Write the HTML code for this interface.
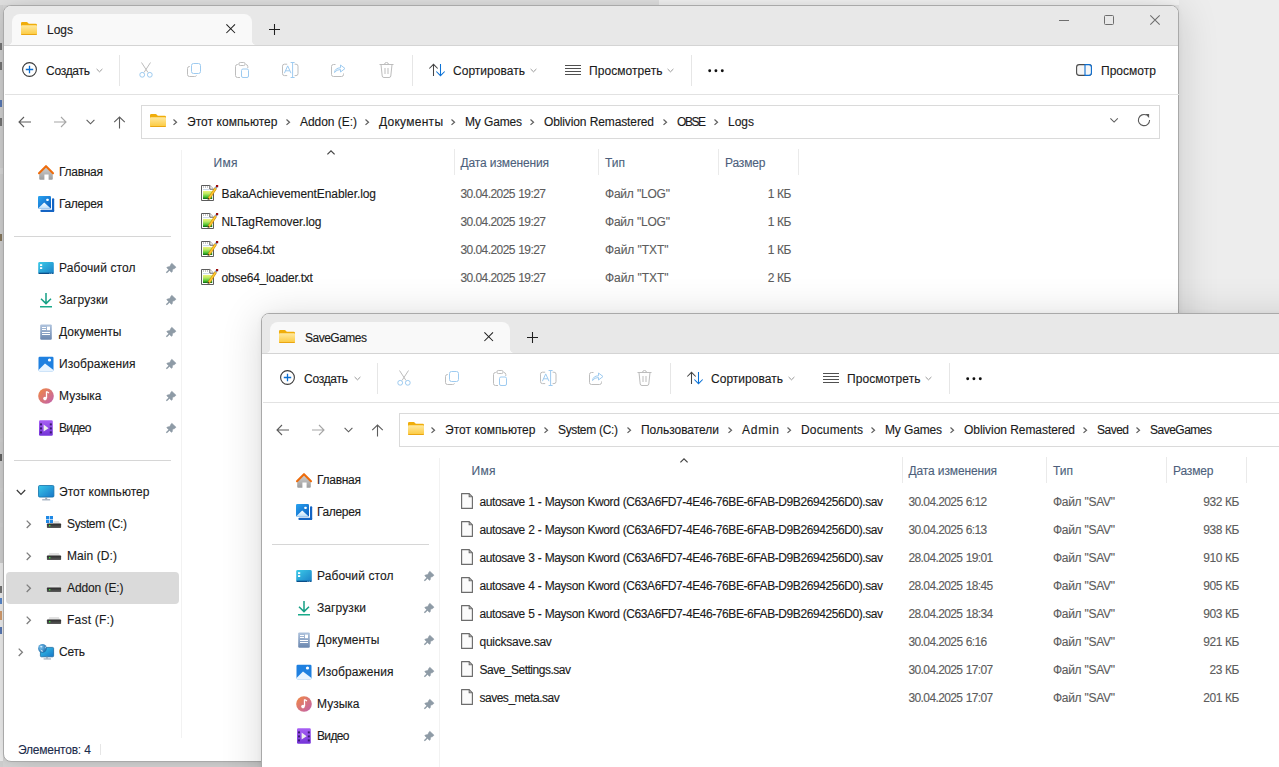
<!DOCTYPE html>
<html><head><meta charset="utf-8"><style>
html,body{margin:0;padding:0}
body{width:1279px;height:767px;overflow:hidden;position:relative;font-family:"Liberation Sans",sans-serif;font-size:12px}
.t{position:absolute;white-space:pre;line-height:16px;font-size:12px;-webkit-text-stroke:0.12px currentColor}
svg{overflow:visible}
</style></head><body>
<div style="position:absolute;left:0px;top:0px;width:1279px;height:767px;background:#d9d9d9"></div>
<div style="position:absolute;left:659px;top:0px;width:620px;height:767px;background:#e6e6e6"></div>
<div style="position:absolute;left:0px;top:0px;width:659px;height:5px;background:#e2e2e2"></div>
<div style="position:absolute;left:659px;top:0px;width:520px;height:5px;background:#f4f4f4"></div>
<div style="position:absolute;left:1179px;top:0px;width:100px;height:767px;background:#ededed"></div>
<div style="position:absolute;left:0px;top:5px;width:3px;height:762px;background:#d4d4d4"></div>
<div style="position:absolute;left:0px;top:168px;width:3px;height:6px;background:#dcdcdc"></div>
<div style="position:absolute;left:0px;top:438px;width:3px;height:4px;background:#d6d6d6"></div>
<div style="position:absolute;left:0px;top:488px;width:3px;height:4px;background:#d6d6d6"></div>
<div style="position:absolute;left:0px;top:523px;width:3px;height:4px;background:#d6d6d6"></div>
<div style="position:absolute;left:0px;top:563px;width:3px;height:198px;background:#f2f2f2"></div>
<div style="position:absolute;left:0px;top:43px;width:2px;height:7px;background:#777"></div>
<div style="position:absolute;left:0px;top:62px;width:2px;height:8px;background:#777"></div>
<div style="position:absolute;left:0px;top:100px;width:2px;height:7px;background:#5a7ab8"></div>
<div style="position:absolute;left:0px;top:118px;width:2px;height:8px;background:#777"></div>
<div style="position:absolute;left:0px;top:234px;width:2px;height:7px;background:#8a7a60"></div>
<div style="position:absolute;left:0px;top:454px;width:2px;height:7px;background:#666"></div>
<div style="position:absolute;left:0px;top:586px;width:2px;height:7px;background:#777"></div>
<div style="position:absolute;left:0px;top:598px;width:2px;height:6px;background:#5a8ad0"></div>
<div style="position:absolute;left:0px;top:611px;width:2px;height:9px;background:#d8a070"></div>
<div style="position:absolute;left:0px;top:627px;width:2px;height:7px;background:#5a7ab8"></div>
<div style="position:absolute;left:3px;top:5px;width:1176px;height:757px;background:#fff;border:1px solid #a9a9a9;border-radius:8px;box-sizing:border-box;box-shadow:0 4px 40px rgba(0,0,0,0.16),0 0 5px rgba(0,0,0,0.05);overflow:hidden"><div style="position:absolute;left:0;top:0;right:0;height:39px;background:#e8e8e8;border-bottom:1px solid #d4d4d4"></div></div>
<div style="position:absolute;left:12px;top:14px;width:240px;height:31px;background:#f9f9f9;border-radius:8px 8px 0 0"></div>
<div style="position:absolute;left:8px;top:41px;width:4px;height:4px;background:radial-gradient(circle at 0 0, transparent 3.6px, #f9f9f9 4.2px)"></div>
<div style="position:absolute;left:252px;top:41px;width:4px;height:4px;background:radial-gradient(circle at 100% 0, transparent 3.6px, #f9f9f9 4.2px)"></div>
<svg style="position:absolute;left:21px;top:22px" width="16" height="13" viewBox="0 0 16 13"><defs><linearGradient id="fg" x1="0" y1="0" x2="0" y2="1"><stop offset="0" stop-color="#ffe9a0"/><stop offset="1" stop-color="#fcc93c"/></linearGradient></defs><path d="M0 1.2 Q0 0 1.2 0 H5.6 Q6.2 0 6.6 0.5 L7.8 1.8 H14.8 Q16 1.8 16 3 V5 H0Z" fill="#f0ad0a"/><rect x="0" y="3.2" width="16" height="9.8" rx="1" fill="url(#fg)"/><rect x="0.3" y="12" width="15.4" height="1" fill="#eaa512"/></svg>
<div class="t" style="left:47.00px;top:22px;color:#1a1a1a;letter-spacing:-0.010px;">Logs</div>
<svg style="position:absolute;left:226px;top:24px" width="10" height="10" viewBox="0 0 10 10"><path d="M0.4 0.4 L9 9 M9 0.4 L0.4 9" stroke="#1f1f1f" stroke-width="1.05"/></svg>
<svg style="position:absolute;left:269px;top:24px" width="11" height="11" viewBox="0 0 11 11"><path d="M5.5 0 V11 M0 5.5 H11" stroke="#1f1f1f" stroke-width="1.05"/></svg>
<svg style="position:absolute;left:1059px;top:20px" width="10" height="1" viewBox="0 0 10 1"><rect width="10" height="1" fill="#6e6e6e"/></svg>
<svg style="position:absolute;left:1104px;top:15px" width="10" height="10" viewBox="0 0 10 10"><rect x="0.5" y="0.5" width="9" height="9" rx="1" fill="none" stroke="#6e6e6e" stroke-width="1"/></svg>
<svg style="position:absolute;left:1150px;top:15px" width="10" height="10" viewBox="0 0 10 10"><path d="M0.3 0.3 L9.7 9.7 M9.7 0.3 L0.3 9.7" stroke="#6e6e6e" stroke-width="1.05"/></svg>
<svg style="position:absolute;left:22px;top:62px" width="15" height="15" viewBox="0 0 15 15"><circle cx="7.5" cy="7.5" r="6.9" fill="none" stroke="#3c3c3c" stroke-width="1.1"/><path d="M7.5 3.8 V11.2 M3.8 7.5 H11.2" stroke="#0b6dd0" stroke-width="1.3"/></svg>
<div class="t" style="left:46.00px;top:63px;color:#1a1a1a;letter-spacing:-0.268px;">Создать</div>
<svg style="position:absolute;left:96px;top:68px" width="7" height="5" viewBox="0 0 7 5"><path d="M0.6 1 L3.5 3.8 L6.4 1" fill="none" stroke="#8a8a8a" stroke-width="0.9"/></svg>
<div style="position:absolute;left:119px;top:55px;width:1px;height:31px;background:#e6e6e6"></div>
<svg style="position:absolute;left:139px;top:62px" width="14" height="16" viewBox="0 0 14 16"><path d="M2.5 0.5 L9 10.5 M11.5 0.5 L5 10.5" stroke="#bdbdbd" stroke-width="1"/><circle cx="3.2" cy="12.8" r="2.4" fill="none" stroke="#9ecbf0" stroke-width="1"/><circle cx="10.8" cy="12.8" r="2.4" fill="none" stroke="#9ecbf0" stroke-width="1"/></svg>
<svg style="position:absolute;left:187px;top:63px" width="14" height="14" viewBox="0 0 14 14"><path d="M3 3.5 H2.5 Q0.5 3.5 0.5 5.5 V11.5 Q0.5 13.5 2.5 13.5 H7.5 Q9 13.5 9.6 12.5" fill="none" stroke="#bdbdbd" stroke-width="1"/><rect x="4.5" y="0.5" width="9" height="10" rx="2" fill="none" stroke="#9ecbf0" stroke-width="1"/></svg>
<svg style="position:absolute;left:235px;top:62px" width="14" height="16" viewBox="0 0 14 16"><path d="M3 2.5 H2.5 Q0.5 2.5 0.5 4.5 V13.5 Q0.5 15.5 2.5 15.5 H5 M11 2.5 Q12.5 2.5 12.8 4.5 V6" fill="none" stroke="#bdbdbd" stroke-width="1"/><rect x="3.8" y="0.5" width="6.4" height="3" rx="1.5" fill="none" stroke="#bdbdbd" stroke-width="1"/><rect x="6.5" y="7" width="7" height="8.5" rx="1.5" fill="none" stroke="#9ecbf0" stroke-width="1"/></svg>
<svg style="position:absolute;left:282px;top:62px" width="17" height="16" viewBox="0 0 17 16"><path d="M5.2 2.2 H2.4 Q0.5 2.2 0.5 4.2 V11.6 Q0.5 13.6 2.4 13.6 H5.2 M12.6 2.2 H14 Q16 2.2 16 4.2 V11.6 Q16 13.6 14 13.6 H12.6" fill="none" stroke="#bdbdbd" stroke-width="1"/><path d="M2.4 11.2 L5.7 3.9 L9 11.2 M3.5 8.8 H7.9" fill="none" stroke="#9ecbf0" stroke-width="1"/><path d="M10.6 0.5 V15.5 M8.6 0.5 H12.6 M8.6 15.5 H12.6" stroke="#9ecbf0" stroke-width="1"/></svg>
<svg style="position:absolute;left:331px;top:63px" width="15" height="14" viewBox="0 0 15 14"><path d="M4.5 1.5 H2.5 Q0.5 1.5 0.5 3.5 V11.5 Q0.5 13.5 2.5 13.5 H10.5 Q12.5 13.5 12.5 11.5 V10.5" fill="none" stroke="#bdbdbd" stroke-width="1"/><path d="M3.5 9.5 Q4 5 9.5 4.8 V2 L14 5.5 L9.5 9 V6.5 Q5.5 6.5 3.5 9.5Z" fill="none" stroke="#9ecbf0" stroke-width="1"/></svg>
<svg style="position:absolute;left:379px;top:62px" width="15" height="16" viewBox="0 0 15 16"><path d="M0.5 2.5 H14.5 M5.5 2.5 Q5.5 0.5 7.5 0.5 Q9.5 0.5 9.5 2.5 M2 2.5 L3.2 14 Q3.4 15.5 5 15.5 H10 Q11.6 15.5 11.8 14 L13 2.5 M6 6 V12 M9 6 V12" fill="none" stroke="#bdbdbd" stroke-width="1"/></svg>
<div style="position:absolute;left:412px;top:55px;width:1px;height:31px;background:#e6e6e6"></div>
<svg style="position:absolute;left:429px;top:62px" width="17" height="15" viewBox="0 0 17 15"><path d="M4.5 14 V2.3 M0.3 6.5 L4.5 2.3 L8.7 6.5" fill="none" stroke="#454545" stroke-width="1.05"/><path d="M11.5 2 V13.7 M7.3 9.5 L11.5 13.7 L15.7 9.5" fill="none" stroke="#0b72d6" stroke-width="1.05"/></svg>
<div class="t" style="left:453.00px;top:63px;color:#1a1a1a;letter-spacing:0.030px;">Сортировать</div>
<svg style="position:absolute;left:530px;top:68px" width="7" height="5" viewBox="0 0 7 5"><path d="M0.6 1 L3.5 3.8 L6.4 1" fill="none" stroke="#8a8a8a" stroke-width="0.9"/></svg>
<svg style="position:absolute;left:565px;top:65px" width="16" height="10" viewBox="0 0 16 10"><path d="M0 0.5 H16 M0 3.5 H16 M0 6.5 H16 M0 9.5 H16" stroke="#505050" stroke-width="1"/></svg>
<div class="t" style="left:589.00px;top:63px;color:#1a1a1a;letter-spacing:0.067px;">Просмотреть</div>
<svg style="position:absolute;left:667px;top:68px" width="7" height="5" viewBox="0 0 7 5"><path d="M0.6 1 L3.5 3.8 L6.4 1" fill="none" stroke="#8a8a8a" stroke-width="0.9"/></svg>
<div style="position:absolute;left:691px;top:55px;width:1px;height:31px;background:#e6e6e6"></div>
<svg style="position:absolute;left:707px;top:69px" width="18" height="4" viewBox="0 0 18 4"><circle cx="2.7" cy="1.7" r="1.45" fill="#111"/><circle cx="8.9" cy="1.7" r="1.45" fill="#111"/><circle cx="15.3" cy="1.7" r="1.45" fill="#111"/></svg>
<svg style="position:absolute;left:1076px;top:64px" width="16" height="12" viewBox="0 0 16 12"><rect x="0.6" y="0.6" width="14.8" height="10.8" rx="2.6" fill="#f6f6f6" stroke="#4a4a4a" stroke-width="1.1"/><path d="M9 0.6 H12.8 Q15.4 0.6 15.4 3.2 V8.8 Q15.4 11.4 12.8 11.4 H9Z" fill="#f6f6f6" stroke="#0b6dd0" stroke-width="1.1"/></svg>
<div class="t" style="left:1101.00px;top:63px;color:#1a1a1a;letter-spacing:0.027px;">Просмотр</div>
<div style="position:absolute;left:5px;top:94px;width:1174px;height:1px;background:#e2e2e2"></div>
<svg style="position:absolute;left:18px;top:116px" width="14" height="12" viewBox="0 0 14 12"><path d="M13 6 H1.2 M6 1 L1 6 L6 11" fill="none" stroke="#5c5c5c" stroke-width="1.1"/></svg>
<svg style="position:absolute;left:53px;top:116px" width="14" height="12" viewBox="0 0 14 12"><path d="M1 6 H12.8 M8 1 L13 6 L8 11" fill="none" stroke="#a6a6a6" stroke-width="1.1"/></svg>
<svg style="position:absolute;left:86px;top:119px" width="9" height="6" viewBox="0 0 9 6"><path d="M0.6 0.8 L4.5 4.8 L8.4 0.8" fill="none" stroke="#5c5c5c" stroke-width="1.1"/></svg>
<svg style="position:absolute;left:113px;top:116px" width="13" height="13" viewBox="0 0 13 13"><path d="M6.5 12.5 V1 M1.2 6.2 L6.5 1 L11.8 6.2" fill="none" stroke="#5c5c5c" stroke-width="1.1"/></svg>
<div style="position:absolute;left:141px;top:105px;width:1019px;height:34px;border:1px solid #dadada;box-sizing:border-box;background:#fff"></div>
<svg style="position:absolute;left:150px;top:114px" width="16" height="13" viewBox="0 0 16 13"><defs><linearGradient id="fg" x1="0" y1="0" x2="0" y2="1"><stop offset="0" stop-color="#ffe9a0"/><stop offset="1" stop-color="#fcc93c"/></linearGradient></defs><path d="M0 1.2 Q0 0 1.2 0 H5.6 Q6.2 0 6.6 0.5 L7.8 1.8 H14.8 Q16 1.8 16 3 V5 H0Z" fill="#f0ad0a"/><rect x="0" y="3.2" width="16" height="9.8" rx="1" fill="url(#fg)"/><rect x="0.3" y="12" width="15.4" height="1" fill="#eaa512"/></svg>
<svg style="position:absolute;left:173px;top:119px" width="6" height="8" viewBox="0 0 6 8"><path d="M0.5 0.5 L3.5 3.2 L0.5 5.9" fill="none" stroke="#606060" stroke-width="1.25"/></svg>
<div class="t" style="left:187.00px;top:114px;color:#1a1a1a;letter-spacing:0.059px;">Этот компьютер</div>
<svg style="position:absolute;left:286px;top:119px" width="6" height="8" viewBox="0 0 6 8"><path d="M0.5 0.5 L3.5 3.2 L0.5 5.9" fill="none" stroke="#606060" stroke-width="1.25"/></svg>
<div class="t" style="left:300.00px;top:114px;color:#1a1a1a;letter-spacing:-0.047px;word-spacing:0.047px;">Addon (E:)</div>
<svg style="position:absolute;left:365px;top:119px" width="6" height="8" viewBox="0 0 6 8"><path d="M0.5 0.5 L3.5 3.2 L0.5 5.9" fill="none" stroke="#606060" stroke-width="1.25"/></svg>
<div class="t" style="left:379.00px;top:114px;color:#1a1a1a;letter-spacing:0.268px;">Документы</div>
<svg style="position:absolute;left:451px;top:119px" width="6" height="8" viewBox="0 0 6 8"><path d="M0.5 0.5 L3.5 3.2 L0.5 5.9" fill="none" stroke="#606060" stroke-width="1.25"/></svg>
<div class="t" style="left:465.00px;top:114px;color:#1a1a1a;letter-spacing:-0.169px;word-spacing:0.169px;">My Games</div>
<svg style="position:absolute;left:530px;top:119px" width="6" height="8" viewBox="0 0 6 8"><path d="M0.5 0.5 L3.5 3.2 L0.5 5.9" fill="none" stroke="#606060" stroke-width="1.25"/></svg>
<div class="t" style="left:544.00px;top:114px;color:#1a1a1a;letter-spacing:-0.121px;word-spacing:0.121px;">Oblivion Remastered</div>
<svg style="position:absolute;left:663px;top:119px" width="6" height="8" viewBox="0 0 6 8"><path d="M0.5 0.5 L3.5 3.2 L0.5 5.9" fill="none" stroke="#606060" stroke-width="1.25"/></svg>
<div class="t" style="left:677.00px;top:114px;color:#1a1a1a;letter-spacing:-1.453px;">OBSE</div>
<svg style="position:absolute;left:714px;top:119px" width="6" height="8" viewBox="0 0 6 8"><path d="M0.5 0.5 L3.5 3.2 L0.5 5.9" fill="none" stroke="#606060" stroke-width="1.25"/></svg>
<div class="t" style="left:728.00px;top:114px;color:#1a1a1a;letter-spacing:-0.010px;">Logs</div>
<svg style="position:absolute;left:1110px;top:118px" width="9" height="5" viewBox="0 0 9 5"><path d="M0.4 0.4 L4.1 4.1 L7.8 0.4" fill="none" stroke="#5c5c5c" stroke-width="1.05"/></svg>
<svg style="position:absolute;left:1137px;top:113px" width="14" height="14" viewBox="0 0 14 14"><path d="M12.6 7 A5.6 5.6 0 1 1 9.6 2.1" fill="none" stroke="#5a5a5a" stroke-width="1.1"/><path d="M8.2 1.1 L12.1 1.1 L12.1 4.9Z" fill="#5a5a5a"/></svg>
<div style="position:absolute;left:181px;top:150px;width:1px;height:588px;background:#f2f2f2"></div>
<svg style="position:absolute;left:38px;top:164px" width="17" height="17" viewBox="0 0 17 17"><defs><linearGradient id="hg" x1="0" y1="0" x2="0" y2="1"><stop offset="0" stop-color="#d0d0d0"/><stop offset="1" stop-color="#9c9c9c"/></linearGradient></defs><path d="M1.2 9 L8 3 L14.8 9 V14.8 Q14.8 15.8 13.8 15.8 H10.6 V10.6 H6.4 V15.8 H2.2 Q1.2 15.8 1.2 14.8Z" fill="url(#hg)"/><path d="M1 9.2 L8 2.2 L15 9.2" fill="none" stroke="#ee6c0c" stroke-width="2.1" stroke-linecap="round" stroke-linejoin="round"/></svg>
<div class="t" style="left:59.00px;top:164px;color:#1a1a1a;letter-spacing:-0.281px;">Главная</div>
<svg style="position:absolute;left:38px;top:196px" width="17" height="16" viewBox="0 0 17 16"><defs><linearGradient id="gg" x1="0" y1="0" x2="1" y2="1"><stop offset="0" stop-color="#2aa4f0"/><stop offset="1" stop-color="#0a5cc0"/></linearGradient><linearGradient id="gm" x1="0" y1="0" x2="0" y2="1"><stop offset="0" stop-color="#ffffff"/><stop offset="1" stop-color="#b8dcfa"/></linearGradient></defs><rect x="14" y="2.2" width="2.2" height="13.8" rx="1" fill="#1464c4"/><rect x="2.4" y="13.8" width="13.8" height="2.2" rx="1" fill="#1464c4"/><rect x="0" y="0" width="13" height="12.6" rx="1.2" fill="url(#gg)"/><path d="M0 12.6 L6.2 6.6 L12.8 12.6Z" fill="url(#gm)"/><rect x="8.4" y="2.8" width="2.2" height="2.2" rx="0.5" fill="#fff"/></svg>
<div class="t" style="left:59.00px;top:196px;color:#1a1a1a;letter-spacing:-0.339px;">Галерея</div>
<div style="position:absolute;left:14px;top:236px;width:157px;height:1px;background:#d6d6d6"></div>
<svg style="position:absolute;left:38px;top:260px" width="17" height="16" viewBox="0 0 17 16"><defs><linearGradient id="dg" x1="0" y1="0" x2="1" y2="1"><stop offset="0" stop-color="#3ccbe8"/><stop offset="1" stop-color="#1a80c8"/></linearGradient></defs><rect x="0.2" y="2" width="15.6" height="12" rx="1.4" fill="url(#dg)"/><rect x="0.6" y="12.7" width="14.8" height="1.3" fill="#0b4e88"/><rect x="11.6" y="12.9" width="0.7" height="1.1" fill="#9ad4f0"/><rect x="13.4" y="12.9" width="0.7" height="1.1" fill="#9ad4f0"/><rect x="2" y="4.2" width="2.2" height="1.8" fill="#fff"/><rect x="2" y="7.2" width="2.2" height="1.8" fill="#fff"/></svg>
<div class="t" style="left:59.00px;top:260px;color:#1a1a1a;letter-spacing:0.107px;">Рабочий стол</div>
<svg style="position:absolute;left:166px;top:263px" width="11" height="11" viewBox="0 0 11 11"><path d="M5.8 0.3 L10 4.2 L8.6 5.6 L6.6 6.2 L6.2 8.8 L5.4 9.3 L0.8 4.8 L1.3 4 L3.8 3.6 L4.8 1.6 Z" fill="#8e9ba6" stroke="#8e9ba6" stroke-width="0.6" stroke-linejoin="round"/><path d="M3.2 7 L0.4 9.8" stroke="#8e9ba6" stroke-width="1.4"/></svg>
<svg style="position:absolute;left:38px;top:292px" width="16" height="16" viewBox="0 0 16 16"><path d="M8 1 V11.5 M3 6.8 L8 11.6 L13 6.8" fill="none" stroke="#16a085" stroke-width="1.5"/><rect x="2" y="14" width="12" height="1.5" fill="#1aaa8a"/></svg>
<div class="t" style="left:59.00px;top:292px;color:#1a1a1a;letter-spacing:0.100px;">Загрузки</div>
<svg style="position:absolute;left:166px;top:295px" width="11" height="11" viewBox="0 0 11 11"><path d="M5.8 0.3 L10 4.2 L8.6 5.6 L6.6 6.2 L6.2 8.8 L5.4 9.3 L0.8 4.8 L1.3 4 L3.8 3.6 L4.8 1.6 Z" fill="#8e9ba6" stroke="#8e9ba6" stroke-width="0.6" stroke-linejoin="round"/><path d="M3.2 7 L0.4 9.8" stroke="#8e9ba6" stroke-width="1.4"/></svg>
<svg style="position:absolute;left:38px;top:324px" width="16" height="16" viewBox="0 0 16 16"><defs><linearGradient id="docg" x1="0" y1="0" x2="0" y2="1"><stop offset="0" stop-color="#b0c4de"/><stop offset="1" stop-color="#6a86ae"/></linearGradient></defs><rect x="2.2" y="0.4" width="11.6" height="15.4" rx="1.2" fill="url(#docg)"/><path d="M4 3.5 H8 M4 5.5 H8 M4 8.5 H12 M4 10.5 H12" stroke="#fff" stroke-width="1"/><rect x="9" y="2.6" width="3" height="3.6" fill="#fff"/></svg>
<div class="t" style="left:59.00px;top:324px;color:#1a1a1a;letter-spacing:0.080px;">Документы</div>
<svg style="position:absolute;left:166px;top:327px" width="11" height="11" viewBox="0 0 11 11"><path d="M5.8 0.3 L10 4.2 L8.6 5.6 L6.6 6.2 L6.2 8.8 L5.4 9.3 L0.8 4.8 L1.3 4 L3.8 3.6 L4.8 1.6 Z" fill="#8e9ba6" stroke="#8e9ba6" stroke-width="0.6" stroke-linejoin="round"/><path d="M3.2 7 L0.4 9.8" stroke="#8e9ba6" stroke-width="1.4"/></svg>
<svg style="position:absolute;left:38px;top:356px" width="16" height="16" viewBox="0 0 16 16"><rect x="0.5" y="0.8" width="15" height="14.4" rx="1.2" fill="#1f80e0"/><path d="M0.5 14 L7 7.5 L15.5 14 V15.2 H0.5Z" fill="#e8f4ff"/><circle cx="11.5" cy="4" r="1.6" fill="#fff"/></svg>
<div class="t" style="left:59.00px;top:356px;color:#1a1a1a;letter-spacing:0.108px;">Изображения</div>
<svg style="position:absolute;left:166px;top:359px" width="11" height="11" viewBox="0 0 11 11"><path d="M5.8 0.3 L10 4.2 L8.6 5.6 L6.6 6.2 L6.2 8.8 L5.4 9.3 L0.8 4.8 L1.3 4 L3.8 3.6 L4.8 1.6 Z" fill="#8e9ba6" stroke="#8e9ba6" stroke-width="0.6" stroke-linejoin="round"/><path d="M3.2 7 L0.4 9.8" stroke="#8e9ba6" stroke-width="1.4"/></svg>
<svg style="position:absolute;left:38px;top:388px" width="16" height="16" viewBox="0 0 16 16"><defs><linearGradient id="mg" x1="0" y1="0" x2="1" y2="1"><stop offset="0" stop-color="#f28a40"/><stop offset="1" stop-color="#c060b0"/></linearGradient></defs><circle cx="8" cy="8" r="7.8" fill="url(#mg)"/><path d="M8.5 3.5 V10.2" stroke="#fff" stroke-width="1.3"/><path d="M8.5 3.5 L11 5" stroke="#fff" stroke-width="1.3"/><circle cx="7" cy="10.6" r="1.8" fill="#fff"/></svg>
<div class="t" style="left:59.00px;top:388px;color:#1a1a1a;letter-spacing:0.009px;">Музыка</div>
<svg style="position:absolute;left:166px;top:391px" width="11" height="11" viewBox="0 0 11 11"><path d="M5.8 0.3 L10 4.2 L8.6 5.6 L6.6 6.2 L6.2 8.8 L5.4 9.3 L0.8 4.8 L1.3 4 L3.8 3.6 L4.8 1.6 Z" fill="#8e9ba6" stroke="#8e9ba6" stroke-width="0.6" stroke-linejoin="round"/><path d="M3.2 7 L0.4 9.8" stroke="#8e9ba6" stroke-width="1.4"/></svg>
<svg style="position:absolute;left:38px;top:420px" width="16" height="16" viewBox="0 0 16 16"><defs><linearGradient id="vg" x1="0" y1="0" x2="0" y2="1"><stop offset="0" stop-color="#a860f4"/><stop offset="1" stop-color="#7434d8"/></linearGradient></defs><rect x="1" y="0.2" width="13.8" height="15.6" rx="1.2" fill="url(#vg)"/><rect x="2" y="3.4" width="2" height="2" fill="#3a1a70"/><rect x="2" y="7.4" width="2" height="2" fill="#3a1a70"/><rect x="2" y="11.4" width="2" height="2" fill="#3a1a70"/><rect x="11.8" y="3.4" width="2" height="2" fill="#3a1a70"/><rect x="11.8" y="7.4" width="2" height="2" fill="#3a1a70"/><rect x="11.8" y="11.4" width="2" height="2" fill="#3a1a70"/><path d="M5.6 4.6 L10.6 8.2 L5.6 11.6Z" fill="#eeeeee"/></svg>
<div class="t" style="left:59.00px;top:420px;color:#1a1a1a;letter-spacing:-0.641px;">Видео</div>
<svg style="position:absolute;left:166px;top:423px" width="11" height="11" viewBox="0 0 11 11"><path d="M5.8 0.3 L10 4.2 L8.6 5.6 L6.6 6.2 L6.2 8.8 L5.4 9.3 L0.8 4.8 L1.3 4 L3.8 3.6 L4.8 1.6 Z" fill="#8e9ba6" stroke="#8e9ba6" stroke-width="0.6" stroke-linejoin="round"/><path d="M3.2 7 L0.4 9.8" stroke="#8e9ba6" stroke-width="1.4"/></svg>
<div style="position:absolute;left:14px;top:460px;width:157px;height:1px;background:#d6d6d6"></div>
<div style="position:absolute;left:6px;top:572px;width:173px;height:32px;background:#dadada;border-radius:4px"></div>
<svg style="position:absolute;left:16px;top:489px" width="10" height="7" viewBox="0 0 10 7"><path d="M0.8 1 L5 5.4 L9.2 1" fill="none" stroke="#3a3a3a" stroke-width="1.2"/></svg>
<svg style="position:absolute;left:38px;top:485px" width="17" height="17" viewBox="0 0 17 17"><defs><linearGradient id="cg" x1="0" y1="0" x2="1" y2="1"><stop offset="0" stop-color="#38c8ea"/><stop offset="1" stop-color="#1776c8"/></linearGradient></defs><rect x="0.5" y="0.5" width="15.4" height="11.6" rx="1.2" fill="url(#cg)" stroke="#1470a8" stroke-width="0.8"/><rect x="7.2" y="12.2" width="2" height="2.2" fill="#9aa8b8"/><rect x="4.2" y="14.2" width="8" height="1.2" fill="#9aa8b8"/></svg>
<div class="t" style="left:59.00px;top:484px;color:#1a1a1a;letter-spacing:0.059px;">Этот компьютер</div>
<svg style="position:absolute;left:26px;top:520px" width="6" height="9" viewBox="0 0 6 9"><path d="M0.7 0.6 L4.4 4.3 L0.7 8" fill="none" stroke="#7e7e7e" stroke-width="1.3"/></svg>
<svg style="position:absolute;left:46px;top:516px" width="16" height="13" viewBox="0 0 16 13"><rect x="0" y="0" width="3.2" height="3.2" fill="#1e88e5"/><rect x="3.8" y="0" width="3.2" height="3.2" fill="#1e88e5"/><rect x="0" y="3.8" width="3.2" height="3.2" fill="#1e88e5"/><rect x="3.8" y="3.8" width="3.2" height="3.2" fill="#1e88e5"/><defs><linearGradient id="dv" x1="0" y1="0" x2="0" y2="1"><stop offset="0" stop-color="#2a2a2a"/><stop offset="1" stop-color="#5a5a5a"/></linearGradient></defs><path d="M7.2 7.8 L7.6 5 H12.8 L14 7.8Z" fill="#e2e2e2"/><rect x="0.9" y="7.6" width="14.2" height="4.3" rx="0.6" fill="url(#dv)"/><rect x="3" y="9" width="1.4" height="1.4" fill="#3ddc3d"/></svg>
<div class="t" style="left:67.00px;top:516px;color:#1a1a1a;letter-spacing:-0.372px;word-spacing:0.372px;">System (C:)</div>
<svg style="position:absolute;left:26px;top:552px" width="6" height="9" viewBox="0 0 6 9"><path d="M0.7 0.6 L4.4 4.3 L0.7 8" fill="none" stroke="#7e7e7e" stroke-width="1.3"/></svg>
<svg style="position:absolute;left:46px;top:548px" width="16" height="13" viewBox="0 0 16 13"><defs><linearGradient id="dv" x1="0" y1="0" x2="0" y2="1"><stop offset="0" stop-color="#2a2a2a"/><stop offset="1" stop-color="#5a5a5a"/></linearGradient></defs><path d="M2.2 7.8 L3.4 5 H12.8 L14 7.8Z" fill="#e2e2e2"/><rect x="0.9" y="7.6" width="14.2" height="4.3" rx="0.6" fill="url(#dv)"/><rect x="3" y="9" width="1.4" height="1.4" fill="#3ddc3d"/></svg>
<div class="t" style="left:67.00px;top:548px;color:#1a1a1a;letter-spacing:0.082px;">Main (D:)</div>
<svg style="position:absolute;left:26px;top:584px" width="6" height="9" viewBox="0 0 6 9"><path d="M0.7 0.6 L4.4 4.3 L0.7 8" fill="none" stroke="#7e7e7e" stroke-width="1.3"/></svg>
<svg style="position:absolute;left:46px;top:580px" width="16" height="13" viewBox="0 0 16 13"><defs><linearGradient id="dv" x1="0" y1="0" x2="0" y2="1"><stop offset="0" stop-color="#2a2a2a"/><stop offset="1" stop-color="#5a5a5a"/></linearGradient></defs><path d="M2.2 7.8 L3.4 5 H12.8 L14 7.8Z" fill="#e2e2e2"/><rect x="0.9" y="7.6" width="14.2" height="4.3" rx="0.6" fill="url(#dv)"/><rect x="3" y="9" width="1.4" height="1.4" fill="#3ddc3d"/></svg>
<div class="t" style="left:67.00px;top:580px;color:#1a1a1a;letter-spacing:-0.109px;word-spacing:0.109px;">Addon (E:)</div>
<svg style="position:absolute;left:26px;top:616px" width="6" height="9" viewBox="0 0 6 9"><path d="M0.7 0.6 L4.4 4.3 L0.7 8" fill="none" stroke="#7e7e7e" stroke-width="1.3"/></svg>
<svg style="position:absolute;left:46px;top:612px" width="16" height="13" viewBox="0 0 16 13"><defs><linearGradient id="dv" x1="0" y1="0" x2="0" y2="1"><stop offset="0" stop-color="#2a2a2a"/><stop offset="1" stop-color="#5a5a5a"/></linearGradient></defs><path d="M2.2 7.8 L3.4 5 H12.8 L14 7.8Z" fill="#e2e2e2"/><rect x="0.9" y="7.6" width="14.2" height="4.3" rx="0.6" fill="url(#dv)"/><rect x="3" y="9" width="1.4" height="1.4" fill="#3ddc3d"/></svg>
<div class="t" style="left:67.00px;top:612px;color:#1a1a1a;letter-spacing:0.209px;">Fast (F:)</div>
<svg style="position:absolute;left:18px;top:648px" width="6" height="9" viewBox="0 0 6 9"><path d="M0.7 0.6 L4.4 4.3 L0.7 8" fill="none" stroke="#7e7e7e" stroke-width="1.3"/></svg>
<svg style="position:absolute;left:38px;top:644px" width="17" height="17" viewBox="0 0 17 17"><defs><linearGradient id="ng" x1="0" y1="0" x2="1" y2="1"><stop offset="0" stop-color="#38c8ea"/><stop offset="1" stop-color="#1776c8"/></linearGradient><radialGradient id="ngl" cx="0.35" cy="0.35" r="0.7"><stop offset="0" stop-color="#7cc4f0"/><stop offset="1" stop-color="#1c6aa8"/></radialGradient></defs><rect x="2.4" y="3.4" width="13.2" height="9.4" rx="1" fill="url(#ng)" stroke="#0f5f98" stroke-width="0.7"/><rect x="8.2" y="12.8" width="1.6" height="1.8" fill="#9aa8b8"/><rect x="5.6" y="14.4" width="7.4" height="1.1" fill="#9aa8b8"/><circle cx="4.4" cy="4.4" r="4.3" fill="url(#ngl)"/><path d="M1.6 2.6 Q3 1.6 4.6 2.2 L3.6 3.6Z M2.2 5.6 L4.6 6.4 L5.2 7.8 L3.4 7.6Z M7 2.2 L8.2 3.6 L7.6 4.6Z" fill="#e8f4ff" opacity="0.85"/></svg>
<div class="t" style="left:59.00px;top:644px;color:#1a1a1a;letter-spacing:-0.234px;">Сеть</div>
<div class="t" style="left:18.00px;top:742px;color:#1c2c4c;letter-spacing:-0.222px;word-spacing:0.222px;">Элементов: 4</div>
<div style="position:absolute;left:100px;top:744px;width:1px;height:11px;background:#e6e6e6"></div>
<div class="t" style="left:213.50px;top:155px;color:#4d5f7c;letter-spacing:0.312px;">Имя</div>
<svg style="position:absolute;left:326.8px;top:150px" width="8" height="5" viewBox="0 0 8 5"><path d="M0.4 4.4 L4 0.8 L7.6 4.4" fill="none" stroke="#444" stroke-width="1.2"/></svg>
<div style="position:absolute;left:454px;top:149px;width:1px;height:26px;background:#eaeaea"></div>
<div style="position:absolute;left:598px;top:149px;width:1px;height:26px;background:#eaeaea"></div>
<div style="position:absolute;left:718px;top:149px;width:1px;height:26px;background:#eaeaea"></div>
<div style="position:absolute;left:798px;top:149px;width:1px;height:26px;background:#eaeaea"></div>
<div class="t" style="left:460.50px;top:155px;color:#4d5f7c;letter-spacing:-0.139px;word-spacing:0.139px;">Дата изменения</div>
<div class="t" style="left:605.00px;top:155px;color:#4d5f7c;letter-spacing:-0.008px;">Тип</div>
<div class="t" style="left:725.00px;top:155px;color:#4d5f7c;letter-spacing:-0.150px;">Размер</div>
<svg style="position:absolute;left:201px;top:185px" width="18" height="17" viewBox="0 0 18 17"><defs><linearGradient id="lg" x1="0" y1="0" x2="0" y2="1"><stop offset="0" stop-color="#eef27a"/><stop offset="0.35" stop-color="#b8e860"/><stop offset="0.75" stop-color="#48c030"/><stop offset="1" stop-color="#0a6010"/></linearGradient></defs><path d="M0.5 0.5 H8.8 L12.5 4.2 V15.5 H0.5Z" fill="#fff" stroke="#5c5c5c" stroke-width="1"/><path d="M8.8 0.5 V4.2 H12.5" fill="#fff" stroke="#5c5c5c" stroke-width="1"/><path d="M2.2 2 H3 M4.2 2 H5 M6.2 2 H7" stroke="#777" stroke-width="1"/><path d="M2 4.6 H8" stroke="#b8cce0" stroke-width="0.8"/><rect x="2" y="6" width="9.2" height="8" fill="url(#lg)"/><path d="M7.6 14 L14.8 3" stroke="#c98a10" stroke-width="2.6"/><path d="M7.6 14 L14.8 3" stroke="#ffc830" stroke-width="1.4"/><path d="M14.6 3.2 L15.8 1.4" stroke="#8aa0c0" stroke-width="2"/><rect x="15" y="0" width="2.2" height="2.2" fill="#9a0a0a"/><path d="M6.6 15.2 L7.2 12.8 L8.6 13.8Z" fill="#3a3020"/></svg>
<div class="t" style="left:221.50px;top:186px;color:#1a1a1a;letter-spacing:-0.091px;">BakaAchievementEnabler.log</div>
<div class="t" style="left:460.50px;top:186px;color:#5c5c5c;letter-spacing:-0.566px;word-spacing:0.566px;">30.04.2025 19:27</div>
<div class="t" style="left:605.00px;top:186px;color:#5c5c5c;letter-spacing:-0.213px;word-spacing:0.213px;">Файл "LOG"</div>
<div class="t" style="left:491.00px;width:300px;text-align:right;top:186px;color:#5c5c5c;letter-spacing:-0.4px;">1 КБ</div>
<svg style="position:absolute;left:201px;top:213px" width="18" height="17" viewBox="0 0 18 17"><defs><linearGradient id="lg" x1="0" y1="0" x2="0" y2="1"><stop offset="0" stop-color="#eef27a"/><stop offset="0.35" stop-color="#b8e860"/><stop offset="0.75" stop-color="#48c030"/><stop offset="1" stop-color="#0a6010"/></linearGradient></defs><path d="M0.5 0.5 H8.8 L12.5 4.2 V15.5 H0.5Z" fill="#fff" stroke="#5c5c5c" stroke-width="1"/><path d="M8.8 0.5 V4.2 H12.5" fill="#fff" stroke="#5c5c5c" stroke-width="1"/><path d="M2.2 2 H3 M4.2 2 H5 M6.2 2 H7" stroke="#777" stroke-width="1"/><path d="M2 4.6 H8" stroke="#b8cce0" stroke-width="0.8"/><rect x="2" y="6" width="9.2" height="8" fill="url(#lg)"/><path d="M7.6 14 L14.8 3" stroke="#c98a10" stroke-width="2.6"/><path d="M7.6 14 L14.8 3" stroke="#ffc830" stroke-width="1.4"/><path d="M14.6 3.2 L15.8 1.4" stroke="#8aa0c0" stroke-width="2"/><rect x="15" y="0" width="2.2" height="2.2" fill="#9a0a0a"/><path d="M6.6 15.2 L7.2 12.8 L8.6 13.8Z" fill="#3a3020"/></svg>
<div class="t" style="left:221.50px;top:214px;color:#1a1a1a;letter-spacing:-0.078px;">NLTagRemover.log</div>
<div class="t" style="left:460.50px;top:214px;color:#5c5c5c;letter-spacing:-0.566px;word-spacing:0.566px;">30.04.2025 19:27</div>
<div class="t" style="left:605.00px;top:214px;color:#5c5c5c;letter-spacing:-0.213px;word-spacing:0.213px;">Файл "LOG"</div>
<div class="t" style="left:491.00px;width:300px;text-align:right;top:214px;color:#5c5c5c;letter-spacing:-0.4px;">1 КБ</div>
<svg style="position:absolute;left:201px;top:241px" width="18" height="17" viewBox="0 0 18 17"><defs><linearGradient id="lg" x1="0" y1="0" x2="0" y2="1"><stop offset="0" stop-color="#eef27a"/><stop offset="0.35" stop-color="#b8e860"/><stop offset="0.75" stop-color="#48c030"/><stop offset="1" stop-color="#0a6010"/></linearGradient></defs><path d="M0.5 0.5 H8.8 L12.5 4.2 V15.5 H0.5Z" fill="#fff" stroke="#5c5c5c" stroke-width="1"/><path d="M8.8 0.5 V4.2 H12.5" fill="#fff" stroke="#5c5c5c" stroke-width="1"/><path d="M2.2 2 H3 M4.2 2 H5 M6.2 2 H7" stroke="#777" stroke-width="1"/><path d="M2 4.6 H8" stroke="#b8cce0" stroke-width="0.8"/><rect x="2" y="6" width="9.2" height="8" fill="url(#lg)"/><path d="M7.6 14 L14.8 3" stroke="#c98a10" stroke-width="2.6"/><path d="M7.6 14 L14.8 3" stroke="#ffc830" stroke-width="1.4"/><path d="M14.6 3.2 L15.8 1.4" stroke="#8aa0c0" stroke-width="2"/><rect x="15" y="0" width="2.2" height="2.2" fill="#9a0a0a"/><path d="M6.6 15.2 L7.2 12.8 L8.6 13.8Z" fill="#3a3020"/></svg>
<div class="t" style="left:221.50px;top:242px;color:#1a1a1a;letter-spacing:-0.242px;">obse64.txt</div>
<div class="t" style="left:460.50px;top:242px;color:#5c5c5c;letter-spacing:-0.566px;word-spacing:0.566px;">30.04.2025 19:27</div>
<div class="t" style="left:605.00px;top:242px;color:#5c5c5c;letter-spacing:-0.066px;word-spacing:0.066px;">Файл "TXT"</div>
<div class="t" style="left:491.00px;width:300px;text-align:right;top:242px;color:#5c5c5c;letter-spacing:-0.4px;">1 КБ</div>
<svg style="position:absolute;left:201px;top:269px" width="18" height="17" viewBox="0 0 18 17"><defs><linearGradient id="lg" x1="0" y1="0" x2="0" y2="1"><stop offset="0" stop-color="#eef27a"/><stop offset="0.35" stop-color="#b8e860"/><stop offset="0.75" stop-color="#48c030"/><stop offset="1" stop-color="#0a6010"/></linearGradient></defs><path d="M0.5 0.5 H8.8 L12.5 4.2 V15.5 H0.5Z" fill="#fff" stroke="#5c5c5c" stroke-width="1"/><path d="M8.8 0.5 V4.2 H12.5" fill="#fff" stroke="#5c5c5c" stroke-width="1"/><path d="M2.2 2 H3 M4.2 2 H5 M6.2 2 H7" stroke="#777" stroke-width="1"/><path d="M2 4.6 H8" stroke="#b8cce0" stroke-width="0.8"/><rect x="2" y="6" width="9.2" height="8" fill="url(#lg)"/><path d="M7.6 14 L14.8 3" stroke="#c98a10" stroke-width="2.6"/><path d="M7.6 14 L14.8 3" stroke="#ffc830" stroke-width="1.4"/><path d="M14.6 3.2 L15.8 1.4" stroke="#8aa0c0" stroke-width="2"/><rect x="15" y="0" width="2.2" height="2.2" fill="#9a0a0a"/><path d="M6.6 15.2 L7.2 12.8 L8.6 13.8Z" fill="#3a3020"/></svg>
<div class="t" style="left:221.50px;top:270px;color:#1a1a1a;letter-spacing:-0.209px;">obse64_loader.txt</div>
<div class="t" style="left:460.50px;top:270px;color:#5c5c5c;letter-spacing:-0.566px;word-spacing:0.566px;">30.04.2025 19:27</div>
<div class="t" style="left:605.00px;top:270px;color:#5c5c5c;letter-spacing:-0.066px;word-spacing:0.066px;">Файл "TXT"</div>
<div class="t" style="left:491.00px;width:300px;text-align:right;top:270px;color:#5c5c5c;letter-spacing:-0.4px;">2 КБ</div>
<div style="position:absolute;left:261px;top:313px;width:2000px;height:1000px;background:#fff;border:1px solid #a9a9a9;border-radius:8px;box-sizing:border-box;box-shadow:0 4px 40px rgba(0,0,0,0.16),0 0 5px rgba(0,0,0,0.05);overflow:hidden"><div style="position:absolute;left:0;top:0;right:0;height:39px;background:#e8e8e8;border-bottom:1px solid #d4d4d4"></div></div>
<div style="position:absolute;left:270px;top:322px;width:240px;height:31px;background:#f9f9f9;border-radius:8px 8px 0 0"></div>
<div style="position:absolute;left:266px;top:349px;width:4px;height:4px;background:radial-gradient(circle at 0 0, transparent 3.6px, #f9f9f9 4.2px)"></div>
<div style="position:absolute;left:510px;top:349px;width:4px;height:4px;background:radial-gradient(circle at 100% 0, transparent 3.6px, #f9f9f9 4.2px)"></div>
<svg style="position:absolute;left:279px;top:330px" width="16" height="13" viewBox="0 0 16 13"><defs><linearGradient id="fg" x1="0" y1="0" x2="0" y2="1"><stop offset="0" stop-color="#ffe9a0"/><stop offset="1" stop-color="#fcc93c"/></linearGradient></defs><path d="M0 1.2 Q0 0 1.2 0 H5.6 Q6.2 0 6.6 0.5 L7.8 1.8 H14.8 Q16 1.8 16 3 V5 H0Z" fill="#f0ad0a"/><rect x="0" y="3.2" width="16" height="9.8" rx="1" fill="url(#fg)"/><rect x="0.3" y="12" width="15.4" height="1" fill="#eaa512"/></svg>
<div class="t" style="left:305.00px;top:330px;color:#1a1a1a;letter-spacing:-0.504px;">SaveGames</div>
<svg style="position:absolute;left:484px;top:332px" width="10" height="10" viewBox="0 0 10 10"><path d="M0.4 0.4 L9 9 M9 0.4 L0.4 9" stroke="#1f1f1f" stroke-width="1.05"/></svg>
<svg style="position:absolute;left:527px;top:332px" width="11" height="11" viewBox="0 0 11 11"><path d="M5.5 0 V11 M0 5.5 H11" stroke="#1f1f1f" stroke-width="1.05"/></svg>
<svg style="position:absolute;left:1317px;top:328px" width="10" height="1" viewBox="0 0 10 1"><rect width="10" height="1" fill="#6e6e6e"/></svg>
<svg style="position:absolute;left:1362px;top:323px" width="10" height="10" viewBox="0 0 10 10"><rect x="0.5" y="0.5" width="9" height="9" rx="1" fill="none" stroke="#6e6e6e" stroke-width="1"/></svg>
<svg style="position:absolute;left:1408px;top:323px" width="10" height="10" viewBox="0 0 10 10"><path d="M0.3 0.3 L9.7 9.7 M9.7 0.3 L0.3 9.7" stroke="#6e6e6e" stroke-width="1.05"/></svg>
<svg style="position:absolute;left:280px;top:370px" width="15" height="15" viewBox="0 0 15 15"><circle cx="7.5" cy="7.5" r="6.9" fill="none" stroke="#3c3c3c" stroke-width="1.1"/><path d="M7.5 3.8 V11.2 M3.8 7.5 H11.2" stroke="#0b6dd0" stroke-width="1.3"/></svg>
<div class="t" style="left:304.00px;top:371px;color:#1a1a1a;letter-spacing:-0.268px;">Создать</div>
<svg style="position:absolute;left:354px;top:376px" width="7" height="5" viewBox="0 0 7 5"><path d="M0.6 1 L3.5 3.8 L6.4 1" fill="none" stroke="#8a8a8a" stroke-width="0.9"/></svg>
<div style="position:absolute;left:377px;top:363px;width:1px;height:31px;background:#e6e6e6"></div>
<svg style="position:absolute;left:397px;top:370px" width="14" height="16" viewBox="0 0 14 16"><path d="M2.5 0.5 L9 10.5 M11.5 0.5 L5 10.5" stroke="#bdbdbd" stroke-width="1"/><circle cx="3.2" cy="12.8" r="2.4" fill="none" stroke="#9ecbf0" stroke-width="1"/><circle cx="10.8" cy="12.8" r="2.4" fill="none" stroke="#9ecbf0" stroke-width="1"/></svg>
<svg style="position:absolute;left:445px;top:371px" width="14" height="14" viewBox="0 0 14 14"><path d="M3 3.5 H2.5 Q0.5 3.5 0.5 5.5 V11.5 Q0.5 13.5 2.5 13.5 H7.5 Q9 13.5 9.6 12.5" fill="none" stroke="#bdbdbd" stroke-width="1"/><rect x="4.5" y="0.5" width="9" height="10" rx="2" fill="none" stroke="#9ecbf0" stroke-width="1"/></svg>
<svg style="position:absolute;left:493px;top:370px" width="14" height="16" viewBox="0 0 14 16"><path d="M3 2.5 H2.5 Q0.5 2.5 0.5 4.5 V13.5 Q0.5 15.5 2.5 15.5 H5 M11 2.5 Q12.5 2.5 12.8 4.5 V6" fill="none" stroke="#bdbdbd" stroke-width="1"/><rect x="3.8" y="0.5" width="6.4" height="3" rx="1.5" fill="none" stroke="#bdbdbd" stroke-width="1"/><rect x="6.5" y="7" width="7" height="8.5" rx="1.5" fill="none" stroke="#9ecbf0" stroke-width="1"/></svg>
<svg style="position:absolute;left:540px;top:370px" width="17" height="16" viewBox="0 0 17 16"><path d="M5.2 2.2 H2.4 Q0.5 2.2 0.5 4.2 V11.6 Q0.5 13.6 2.4 13.6 H5.2 M12.6 2.2 H14 Q16 2.2 16 4.2 V11.6 Q16 13.6 14 13.6 H12.6" fill="none" stroke="#bdbdbd" stroke-width="1"/><path d="M2.4 11.2 L5.7 3.9 L9 11.2 M3.5 8.8 H7.9" fill="none" stroke="#9ecbf0" stroke-width="1"/><path d="M10.6 0.5 V15.5 M8.6 0.5 H12.6 M8.6 15.5 H12.6" stroke="#9ecbf0" stroke-width="1"/></svg>
<svg style="position:absolute;left:589px;top:371px" width="15" height="14" viewBox="0 0 15 14"><path d="M4.5 1.5 H2.5 Q0.5 1.5 0.5 3.5 V11.5 Q0.5 13.5 2.5 13.5 H10.5 Q12.5 13.5 12.5 11.5 V10.5" fill="none" stroke="#bdbdbd" stroke-width="1"/><path d="M3.5 9.5 Q4 5 9.5 4.8 V2 L14 5.5 L9.5 9 V6.5 Q5.5 6.5 3.5 9.5Z" fill="none" stroke="#9ecbf0" stroke-width="1"/></svg>
<svg style="position:absolute;left:637px;top:370px" width="15" height="16" viewBox="0 0 15 16"><path d="M0.5 2.5 H14.5 M5.5 2.5 Q5.5 0.5 7.5 0.5 Q9.5 0.5 9.5 2.5 M2 2.5 L3.2 14 Q3.4 15.5 5 15.5 H10 Q11.6 15.5 11.8 14 L13 2.5 M6 6 V12 M9 6 V12" fill="none" stroke="#bdbdbd" stroke-width="1"/></svg>
<div style="position:absolute;left:670px;top:363px;width:1px;height:31px;background:#e6e6e6"></div>
<svg style="position:absolute;left:687px;top:370px" width="17" height="15" viewBox="0 0 17 15"><path d="M4.5 14 V2.3 M0.3 6.5 L4.5 2.3 L8.7 6.5" fill="none" stroke="#454545" stroke-width="1.05"/><path d="M11.5 2 V13.7 M7.3 9.5 L11.5 13.7 L15.7 9.5" fill="none" stroke="#0b72d6" stroke-width="1.05"/></svg>
<div class="t" style="left:711.00px;top:371px;color:#1a1a1a;letter-spacing:0.030px;">Сортировать</div>
<svg style="position:absolute;left:788px;top:376px" width="7" height="5" viewBox="0 0 7 5"><path d="M0.6 1 L3.5 3.8 L6.4 1" fill="none" stroke="#8a8a8a" stroke-width="0.9"/></svg>
<svg style="position:absolute;left:823px;top:373px" width="16" height="10" viewBox="0 0 16 10"><path d="M0 0.5 H16 M0 3.5 H16 M0 6.5 H16 M0 9.5 H16" stroke="#505050" stroke-width="1"/></svg>
<div class="t" style="left:847.00px;top:371px;color:#1a1a1a;letter-spacing:0.067px;">Просмотреть</div>
<svg style="position:absolute;left:925px;top:376px" width="7" height="5" viewBox="0 0 7 5"><path d="M0.6 1 L3.5 3.8 L6.4 1" fill="none" stroke="#8a8a8a" stroke-width="0.9"/></svg>
<div style="position:absolute;left:949px;top:363px;width:1px;height:31px;background:#e6e6e6"></div>
<svg style="position:absolute;left:965px;top:377px" width="18" height="4" viewBox="0 0 18 4"><circle cx="2.7" cy="1.7" r="1.45" fill="#111"/><circle cx="8.9" cy="1.7" r="1.45" fill="#111"/><circle cx="15.3" cy="1.7" r="1.45" fill="#111"/></svg>
<svg style="position:absolute;left:1334px;top:372px" width="16" height="12" viewBox="0 0 16 12"><rect x="0.6" y="0.6" width="14.8" height="10.8" rx="2.6" fill="#f6f6f6" stroke="#4a4a4a" stroke-width="1.1"/><path d="M9 0.6 H12.8 Q15.4 0.6 15.4 3.2 V8.8 Q15.4 11.4 12.8 11.4 H9Z" fill="#f6f6f6" stroke="#0b6dd0" stroke-width="1.1"/></svg>
<div class="t" style="left:1359.00px;top:371px;color:#1a1a1a;letter-spacing:0.027px;">Просмотр</div>
<div style="position:absolute;left:263px;top:402px;width:1998px;height:1px;background:#e2e2e2"></div>
<svg style="position:absolute;left:276px;top:424px" width="14" height="12" viewBox="0 0 14 12"><path d="M13 6 H1.2 M6 1 L1 6 L6 11" fill="none" stroke="#5c5c5c" stroke-width="1.1"/></svg>
<svg style="position:absolute;left:311px;top:424px" width="14" height="12" viewBox="0 0 14 12"><path d="M1 6 H12.8 M8 1 L13 6 L8 11" fill="none" stroke="#a6a6a6" stroke-width="1.1"/></svg>
<svg style="position:absolute;left:344px;top:427px" width="9" height="6" viewBox="0 0 9 6"><path d="M0.6 0.8 L4.5 4.8 L8.4 0.8" fill="none" stroke="#5c5c5c" stroke-width="1.1"/></svg>
<svg style="position:absolute;left:371px;top:424px" width="13" height="13" viewBox="0 0 13 13"><path d="M6.5 12.5 V1 M1.2 6.2 L6.5 1 L11.8 6.2" fill="none" stroke="#5c5c5c" stroke-width="1.1"/></svg>
<div style="position:absolute;left:399px;top:413px;width:2000px;height:34px;border:1px solid #dadada;box-sizing:border-box;background:#fff"></div>
<svg style="position:absolute;left:408px;top:422px" width="16" height="13" viewBox="0 0 16 13"><defs><linearGradient id="fg" x1="0" y1="0" x2="0" y2="1"><stop offset="0" stop-color="#ffe9a0"/><stop offset="1" stop-color="#fcc93c"/></linearGradient></defs><path d="M0 1.2 Q0 0 1.2 0 H5.6 Q6.2 0 6.6 0.5 L7.8 1.8 H14.8 Q16 1.8 16 3 V5 H0Z" fill="#f0ad0a"/><rect x="0" y="3.2" width="16" height="9.8" rx="1" fill="url(#fg)"/><rect x="0.3" y="12" width="15.4" height="1" fill="#eaa512"/></svg>
<svg style="position:absolute;left:431px;top:427px" width="6" height="8" viewBox="0 0 6 8"><path d="M0.5 0.5 L3.5 3.2 L0.5 5.9" fill="none" stroke="#606060" stroke-width="1.25"/></svg>
<div class="t" style="left:445.00px;top:422px;color:#1a1a1a;letter-spacing:0.059px;">Этот компьютер</div>
<svg style="position:absolute;left:544px;top:427px" width="6" height="8" viewBox="0 0 6 8"><path d="M0.5 0.5 L3.5 3.2 L0.5 5.9" fill="none" stroke="#606060" stroke-width="1.25"/></svg>
<div class="t" style="left:558.00px;top:422px;color:#1a1a1a;letter-spacing:-0.372px;word-spacing:0.372px;">System (C:)</div>
<svg style="position:absolute;left:627px;top:427px" width="6" height="8" viewBox="0 0 6 8"><path d="M0.5 0.5 L3.5 3.2 L0.5 5.9" fill="none" stroke="#606060" stroke-width="1.25"/></svg>
<div class="t" style="left:641.00px;top:422px;color:#1a1a1a;letter-spacing:-0.030px;">Пользователи</div>
<svg style="position:absolute;left:728px;top:427px" width="6" height="8" viewBox="0 0 6 8"><path d="M0.5 0.5 L3.5 3.2 L0.5 5.9" fill="none" stroke="#606060" stroke-width="1.25"/></svg>
<div class="t" style="left:742.00px;top:422px;color:#1a1a1a;letter-spacing:0.746px;">Admin</div>
<svg style="position:absolute;left:787px;top:427px" width="6" height="8" viewBox="0 0 6 8"><path d="M0.5 0.5 L3.5 3.2 L0.5 5.9" fill="none" stroke="#606060" stroke-width="1.25"/></svg>
<div class="t" style="left:801.00px;top:422px;color:#1a1a1a;letter-spacing:0.162px;">Documents</div>
<svg style="position:absolute;left:871px;top:427px" width="6" height="8" viewBox="0 0 6 8"><path d="M0.5 0.5 L3.5 3.2 L0.5 5.9" fill="none" stroke="#606060" stroke-width="1.25"/></svg>
<div class="t" style="left:885.00px;top:422px;color:#1a1a1a;letter-spacing:-0.169px;word-spacing:0.169px;">My Games</div>
<svg style="position:absolute;left:950px;top:427px" width="6" height="8" viewBox="0 0 6 8"><path d="M0.5 0.5 L3.5 3.2 L0.5 5.9" fill="none" stroke="#606060" stroke-width="1.25"/></svg>
<div class="t" style="left:964.00px;top:422px;color:#1a1a1a;letter-spacing:-0.062px;word-spacing:0.062px;">Oblivion Remastered</div>
<svg style="position:absolute;left:1083px;top:427px" width="6" height="8" viewBox="0 0 6 8"><path d="M0.5 0.5 L3.5 3.2 L0.5 5.9" fill="none" stroke="#606060" stroke-width="1.25"/></svg>
<div class="t" style="left:1097.00px;top:422px;color:#1a1a1a;letter-spacing:-0.508px;">Saved</div>
<svg style="position:absolute;left:1136px;top:427px" width="6" height="8" viewBox="0 0 6 8"><path d="M0.5 0.5 L3.5 3.2 L0.5 5.9" fill="none" stroke="#606060" stroke-width="1.25"/></svg>
<div class="t" style="left:1150.00px;top:422px;color:#1a1a1a;letter-spacing:-0.504px;">SaveGames</div>
<svg style="position:absolute;left:1368px;top:426px" width="9" height="5" viewBox="0 0 9 5"><path d="M0.4 0.4 L4.1 4.1 L7.8 0.4" fill="none" stroke="#5c5c5c" stroke-width="1.05"/></svg>
<svg style="position:absolute;left:1395px;top:421px" width="14" height="14" viewBox="0 0 14 14"><path d="M12.6 7 A5.6 5.6 0 1 1 9.6 2.1" fill="none" stroke="#5a5a5a" stroke-width="1.1"/><path d="M8.2 1.1 L12.1 1.1 L12.1 4.9Z" fill="#5a5a5a"/></svg>
<div style="position:absolute;left:439px;top:458px;width:1px;height:588px;background:#f2f2f2"></div>
<svg style="position:absolute;left:296px;top:472px" width="17" height="17" viewBox="0 0 17 17"><defs><linearGradient id="hg" x1="0" y1="0" x2="0" y2="1"><stop offset="0" stop-color="#d0d0d0"/><stop offset="1" stop-color="#9c9c9c"/></linearGradient></defs><path d="M1.2 9 L8 3 L14.8 9 V14.8 Q14.8 15.8 13.8 15.8 H10.6 V10.6 H6.4 V15.8 H2.2 Q1.2 15.8 1.2 14.8Z" fill="url(#hg)"/><path d="M1 9.2 L8 2.2 L15 9.2" fill="none" stroke="#ee6c0c" stroke-width="2.1" stroke-linecap="round" stroke-linejoin="round"/></svg>
<div class="t" style="left:317.00px;top:472px;color:#1a1a1a;letter-spacing:-0.281px;">Главная</div>
<svg style="position:absolute;left:296px;top:504px" width="17" height="16" viewBox="0 0 17 16"><defs><linearGradient id="gg" x1="0" y1="0" x2="1" y2="1"><stop offset="0" stop-color="#2aa4f0"/><stop offset="1" stop-color="#0a5cc0"/></linearGradient><linearGradient id="gm" x1="0" y1="0" x2="0" y2="1"><stop offset="0" stop-color="#ffffff"/><stop offset="1" stop-color="#b8dcfa"/></linearGradient></defs><rect x="14" y="2.2" width="2.2" height="13.8" rx="1" fill="#1464c4"/><rect x="2.4" y="13.8" width="13.8" height="2.2" rx="1" fill="#1464c4"/><rect x="0" y="0" width="13" height="12.6" rx="1.2" fill="url(#gg)"/><path d="M0 12.6 L6.2 6.6 L12.8 12.6Z" fill="url(#gm)"/><rect x="8.4" y="2.8" width="2.2" height="2.2" rx="0.5" fill="#fff"/></svg>
<div class="t" style="left:317.00px;top:504px;color:#1a1a1a;letter-spacing:-0.339px;">Галерея</div>
<div style="position:absolute;left:272px;top:544px;width:157px;height:1px;background:#d6d6d6"></div>
<svg style="position:absolute;left:296px;top:568px" width="17" height="16" viewBox="0 0 17 16"><defs><linearGradient id="dg" x1="0" y1="0" x2="1" y2="1"><stop offset="0" stop-color="#3ccbe8"/><stop offset="1" stop-color="#1a80c8"/></linearGradient></defs><rect x="0.2" y="2" width="15.6" height="12" rx="1.4" fill="url(#dg)"/><rect x="0.6" y="12.7" width="14.8" height="1.3" fill="#0b4e88"/><rect x="11.6" y="12.9" width="0.7" height="1.1" fill="#9ad4f0"/><rect x="13.4" y="12.9" width="0.7" height="1.1" fill="#9ad4f0"/><rect x="2" y="4.2" width="2.2" height="1.8" fill="#fff"/><rect x="2" y="7.2" width="2.2" height="1.8" fill="#fff"/></svg>
<div class="t" style="left:317.00px;top:568px;color:#1a1a1a;letter-spacing:0.107px;">Рабочий стол</div>
<svg style="position:absolute;left:424px;top:571px" width="11" height="11" viewBox="0 0 11 11"><path d="M5.8 0.3 L10 4.2 L8.6 5.6 L6.6 6.2 L6.2 8.8 L5.4 9.3 L0.8 4.8 L1.3 4 L3.8 3.6 L4.8 1.6 Z" fill="#8e9ba6" stroke="#8e9ba6" stroke-width="0.6" stroke-linejoin="round"/><path d="M3.2 7 L0.4 9.8" stroke="#8e9ba6" stroke-width="1.4"/></svg>
<svg style="position:absolute;left:296px;top:600px" width="16" height="16" viewBox="0 0 16 16"><path d="M8 1 V11.5 M3 6.8 L8 11.6 L13 6.8" fill="none" stroke="#16a085" stroke-width="1.5"/><rect x="2" y="14" width="12" height="1.5" fill="#1aaa8a"/></svg>
<div class="t" style="left:317.00px;top:600px;color:#1a1a1a;letter-spacing:0.100px;">Загрузки</div>
<svg style="position:absolute;left:424px;top:603px" width="11" height="11" viewBox="0 0 11 11"><path d="M5.8 0.3 L10 4.2 L8.6 5.6 L6.6 6.2 L6.2 8.8 L5.4 9.3 L0.8 4.8 L1.3 4 L3.8 3.6 L4.8 1.6 Z" fill="#8e9ba6" stroke="#8e9ba6" stroke-width="0.6" stroke-linejoin="round"/><path d="M3.2 7 L0.4 9.8" stroke="#8e9ba6" stroke-width="1.4"/></svg>
<svg style="position:absolute;left:296px;top:632px" width="16" height="16" viewBox="0 0 16 16"><defs><linearGradient id="docg" x1="0" y1="0" x2="0" y2="1"><stop offset="0" stop-color="#b0c4de"/><stop offset="1" stop-color="#6a86ae"/></linearGradient></defs><rect x="2.2" y="0.4" width="11.6" height="15.4" rx="1.2" fill="url(#docg)"/><path d="M4 3.5 H8 M4 5.5 H8 M4 8.5 H12 M4 10.5 H12" stroke="#fff" stroke-width="1"/><rect x="9" y="2.6" width="3" height="3.6" fill="#fff"/></svg>
<div class="t" style="left:317.00px;top:632px;color:#1a1a1a;letter-spacing:0.080px;">Документы</div>
<svg style="position:absolute;left:424px;top:635px" width="11" height="11" viewBox="0 0 11 11"><path d="M5.8 0.3 L10 4.2 L8.6 5.6 L6.6 6.2 L6.2 8.8 L5.4 9.3 L0.8 4.8 L1.3 4 L3.8 3.6 L4.8 1.6 Z" fill="#8e9ba6" stroke="#8e9ba6" stroke-width="0.6" stroke-linejoin="round"/><path d="M3.2 7 L0.4 9.8" stroke="#8e9ba6" stroke-width="1.4"/></svg>
<svg style="position:absolute;left:296px;top:664px" width="16" height="16" viewBox="0 0 16 16"><rect x="0.5" y="0.8" width="15" height="14.4" rx="1.2" fill="#1f80e0"/><path d="M0.5 14 L7 7.5 L15.5 14 V15.2 H0.5Z" fill="#e8f4ff"/><circle cx="11.5" cy="4" r="1.6" fill="#fff"/></svg>
<div class="t" style="left:317.00px;top:664px;color:#1a1a1a;letter-spacing:0.108px;">Изображения</div>
<svg style="position:absolute;left:424px;top:667px" width="11" height="11" viewBox="0 0 11 11"><path d="M5.8 0.3 L10 4.2 L8.6 5.6 L6.6 6.2 L6.2 8.8 L5.4 9.3 L0.8 4.8 L1.3 4 L3.8 3.6 L4.8 1.6 Z" fill="#8e9ba6" stroke="#8e9ba6" stroke-width="0.6" stroke-linejoin="round"/><path d="M3.2 7 L0.4 9.8" stroke="#8e9ba6" stroke-width="1.4"/></svg>
<svg style="position:absolute;left:296px;top:696px" width="16" height="16" viewBox="0 0 16 16"><defs><linearGradient id="mg" x1="0" y1="0" x2="1" y2="1"><stop offset="0" stop-color="#f28a40"/><stop offset="1" stop-color="#c060b0"/></linearGradient></defs><circle cx="8" cy="8" r="7.8" fill="url(#mg)"/><path d="M8.5 3.5 V10.2" stroke="#fff" stroke-width="1.3"/><path d="M8.5 3.5 L11 5" stroke="#fff" stroke-width="1.3"/><circle cx="7" cy="10.6" r="1.8" fill="#fff"/></svg>
<div class="t" style="left:317.00px;top:696px;color:#1a1a1a;letter-spacing:0.009px;">Музыка</div>
<svg style="position:absolute;left:424px;top:699px" width="11" height="11" viewBox="0 0 11 11"><path d="M5.8 0.3 L10 4.2 L8.6 5.6 L6.6 6.2 L6.2 8.8 L5.4 9.3 L0.8 4.8 L1.3 4 L3.8 3.6 L4.8 1.6 Z" fill="#8e9ba6" stroke="#8e9ba6" stroke-width="0.6" stroke-linejoin="round"/><path d="M3.2 7 L0.4 9.8" stroke="#8e9ba6" stroke-width="1.4"/></svg>
<svg style="position:absolute;left:296px;top:728px" width="16" height="16" viewBox="0 0 16 16"><defs><linearGradient id="vg" x1="0" y1="0" x2="0" y2="1"><stop offset="0" stop-color="#a860f4"/><stop offset="1" stop-color="#7434d8"/></linearGradient></defs><rect x="1" y="0.2" width="13.8" height="15.6" rx="1.2" fill="url(#vg)"/><rect x="2" y="3.4" width="2" height="2" fill="#3a1a70"/><rect x="2" y="7.4" width="2" height="2" fill="#3a1a70"/><rect x="2" y="11.4" width="2" height="2" fill="#3a1a70"/><rect x="11.8" y="3.4" width="2" height="2" fill="#3a1a70"/><rect x="11.8" y="7.4" width="2" height="2" fill="#3a1a70"/><rect x="11.8" y="11.4" width="2" height="2" fill="#3a1a70"/><path d="M5.6 4.6 L10.6 8.2 L5.6 11.6Z" fill="#eeeeee"/></svg>
<div class="t" style="left:317.00px;top:728px;color:#1a1a1a;letter-spacing:-0.641px;">Видео</div>
<svg style="position:absolute;left:424px;top:731px" width="11" height="11" viewBox="0 0 11 11"><path d="M5.8 0.3 L10 4.2 L8.6 5.6 L6.6 6.2 L6.2 8.8 L5.4 9.3 L0.8 4.8 L1.3 4 L3.8 3.6 L4.8 1.6 Z" fill="#8e9ba6" stroke="#8e9ba6" stroke-width="0.6" stroke-linejoin="round"/><path d="M3.2 7 L0.4 9.8" stroke="#8e9ba6" stroke-width="1.4"/></svg>
<div style="position:absolute;left:272px;top:768px;width:157px;height:1px;background:#d6d6d6"></div>
<div style="position:absolute;left:264px;top:880px;width:173px;height:32px;background:#dadada;border-radius:4px"></div>
<svg style="position:absolute;left:274px;top:797px" width="10" height="7" viewBox="0 0 10 7"><path d="M0.8 1 L5 5.4 L9.2 1" fill="none" stroke="#3a3a3a" stroke-width="1.2"/></svg>
<svg style="position:absolute;left:296px;top:793px" width="17" height="17" viewBox="0 0 17 17"><defs><linearGradient id="cg" x1="0" y1="0" x2="1" y2="1"><stop offset="0" stop-color="#38c8ea"/><stop offset="1" stop-color="#1776c8"/></linearGradient></defs><rect x="0.5" y="0.5" width="15.4" height="11.6" rx="1.2" fill="url(#cg)" stroke="#1470a8" stroke-width="0.8"/><rect x="7.2" y="12.2" width="2" height="2.2" fill="#9aa8b8"/><rect x="4.2" y="14.2" width="8" height="1.2" fill="#9aa8b8"/></svg>
<div class="t" style="left:317.00px;top:792px;color:#1a1a1a;letter-spacing:0.059px;">Этот компьютер</div>
<svg style="position:absolute;left:284px;top:828px" width="6" height="9" viewBox="0 0 6 9"><path d="M0.7 0.6 L4.4 4.3 L0.7 8" fill="none" stroke="#7e7e7e" stroke-width="1.3"/></svg>
<svg style="position:absolute;left:304px;top:824px" width="16" height="13" viewBox="0 0 16 13"><rect x="0" y="0" width="3.2" height="3.2" fill="#1e88e5"/><rect x="3.8" y="0" width="3.2" height="3.2" fill="#1e88e5"/><rect x="0" y="3.8" width="3.2" height="3.2" fill="#1e88e5"/><rect x="3.8" y="3.8" width="3.2" height="3.2" fill="#1e88e5"/><defs><linearGradient id="dv" x1="0" y1="0" x2="0" y2="1"><stop offset="0" stop-color="#2a2a2a"/><stop offset="1" stop-color="#5a5a5a"/></linearGradient></defs><path d="M7.2 7.8 L7.6 5 H12.8 L14 7.8Z" fill="#e2e2e2"/><rect x="0.9" y="7.6" width="14.2" height="4.3" rx="0.6" fill="url(#dv)"/><rect x="3" y="9" width="1.4" height="1.4" fill="#3ddc3d"/></svg>
<div class="t" style="left:325.00px;top:824px;color:#1a1a1a;letter-spacing:-0.372px;word-spacing:0.372px;">System (C:)</div>
<svg style="position:absolute;left:284px;top:860px" width="6" height="9" viewBox="0 0 6 9"><path d="M0.7 0.6 L4.4 4.3 L0.7 8" fill="none" stroke="#7e7e7e" stroke-width="1.3"/></svg>
<svg style="position:absolute;left:304px;top:856px" width="16" height="13" viewBox="0 0 16 13"><defs><linearGradient id="dv" x1="0" y1="0" x2="0" y2="1"><stop offset="0" stop-color="#2a2a2a"/><stop offset="1" stop-color="#5a5a5a"/></linearGradient></defs><path d="M2.2 7.8 L3.4 5 H12.8 L14 7.8Z" fill="#e2e2e2"/><rect x="0.9" y="7.6" width="14.2" height="4.3" rx="0.6" fill="url(#dv)"/><rect x="3" y="9" width="1.4" height="1.4" fill="#3ddc3d"/></svg>
<div class="t" style="left:325.00px;top:856px;color:#1a1a1a;letter-spacing:0.082px;">Main (D:)</div>
<svg style="position:absolute;left:284px;top:892px" width="6" height="9" viewBox="0 0 6 9"><path d="M0.7 0.6 L4.4 4.3 L0.7 8" fill="none" stroke="#7e7e7e" stroke-width="1.3"/></svg>
<svg style="position:absolute;left:304px;top:888px" width="16" height="13" viewBox="0 0 16 13"><defs><linearGradient id="dv" x1="0" y1="0" x2="0" y2="1"><stop offset="0" stop-color="#2a2a2a"/><stop offset="1" stop-color="#5a5a5a"/></linearGradient></defs><path d="M2.2 7.8 L3.4 5 H12.8 L14 7.8Z" fill="#e2e2e2"/><rect x="0.9" y="7.6" width="14.2" height="4.3" rx="0.6" fill="url(#dv)"/><rect x="3" y="9" width="1.4" height="1.4" fill="#3ddc3d"/></svg>
<div class="t" style="left:325.00px;top:888px;color:#1a1a1a;letter-spacing:-0.109px;word-spacing:0.109px;">Addon (E:)</div>
<svg style="position:absolute;left:284px;top:924px" width="6" height="9" viewBox="0 0 6 9"><path d="M0.7 0.6 L4.4 4.3 L0.7 8" fill="none" stroke="#7e7e7e" stroke-width="1.3"/></svg>
<svg style="position:absolute;left:304px;top:920px" width="16" height="13" viewBox="0 0 16 13"><defs><linearGradient id="dv" x1="0" y1="0" x2="0" y2="1"><stop offset="0" stop-color="#2a2a2a"/><stop offset="1" stop-color="#5a5a5a"/></linearGradient></defs><path d="M2.2 7.8 L3.4 5 H12.8 L14 7.8Z" fill="#e2e2e2"/><rect x="0.9" y="7.6" width="14.2" height="4.3" rx="0.6" fill="url(#dv)"/><rect x="3" y="9" width="1.4" height="1.4" fill="#3ddc3d"/></svg>
<div class="t" style="left:325.00px;top:920px;color:#1a1a1a;letter-spacing:0.209px;">Fast (F:)</div>
<svg style="position:absolute;left:276px;top:956px" width="6" height="9" viewBox="0 0 6 9"><path d="M0.7 0.6 L4.4 4.3 L0.7 8" fill="none" stroke="#7e7e7e" stroke-width="1.3"/></svg>
<svg style="position:absolute;left:296px;top:952px" width="17" height="17" viewBox="0 0 17 17"><defs><linearGradient id="ng" x1="0" y1="0" x2="1" y2="1"><stop offset="0" stop-color="#38c8ea"/><stop offset="1" stop-color="#1776c8"/></linearGradient><radialGradient id="ngl" cx="0.35" cy="0.35" r="0.7"><stop offset="0" stop-color="#7cc4f0"/><stop offset="1" stop-color="#1c6aa8"/></radialGradient></defs><rect x="2.4" y="3.4" width="13.2" height="9.4" rx="1" fill="url(#ng)" stroke="#0f5f98" stroke-width="0.7"/><rect x="8.2" y="12.8" width="1.6" height="1.8" fill="#9aa8b8"/><rect x="5.6" y="14.4" width="7.4" height="1.1" fill="#9aa8b8"/><circle cx="4.4" cy="4.4" r="4.3" fill="url(#ngl)"/><path d="M1.6 2.6 Q3 1.6 4.6 2.2 L3.6 3.6Z M2.2 5.6 L4.6 6.4 L5.2 7.8 L3.4 7.6Z M7 2.2 L8.2 3.6 L7.6 4.6Z" fill="#e8f4ff" opacity="0.85"/></svg>
<div class="t" style="left:317.00px;top:952px;color:#1a1a1a;letter-spacing:-0.234px;">Сеть</div>
<div class="t" style="left:276.00px;top:1050px;color:#1c2c4c;letter-spacing:-0.222px;word-spacing:0.222px;">Элементов: 4</div>
<div style="position:absolute;left:358px;top:1052px;width:1px;height:11px;background:#e6e6e6"></div>
<div class="t" style="left:471.50px;top:463px;color:#4d5f7c;letter-spacing:0.312px;">Имя</div>
<svg style="position:absolute;left:679.8px;top:458px" width="8" height="5" viewBox="0 0 8 5"><path d="M0.4 4.4 L4 0.8 L7.6 4.4" fill="none" stroke="#444" stroke-width="1.2"/></svg>
<div style="position:absolute;left:902px;top:457px;width:1px;height:26px;background:#eaeaea"></div>
<div style="position:absolute;left:1046px;top:457px;width:1px;height:26px;background:#eaeaea"></div>
<div style="position:absolute;left:1166px;top:457px;width:1px;height:26px;background:#eaeaea"></div>
<div style="position:absolute;left:1246px;top:457px;width:1px;height:26px;background:#eaeaea"></div>
<div class="t" style="left:908.50px;top:463px;color:#4d5f7c;letter-spacing:-0.139px;word-spacing:0.139px;">Дата изменения</div>
<div class="t" style="left:1053.00px;top:463px;color:#4d5f7c;letter-spacing:-0.008px;">Тип</div>
<div class="t" style="left:1173.00px;top:463px;color:#4d5f7c;letter-spacing:-0.150px;">Размер</div>
<svg style="position:absolute;left:461px;top:493px" width="12" height="16" viewBox="0 0 12 16"><path d="M0.6 0.6 H8.2 L11.4 3.8 V15.4 H0.6Z" fill="#fbfbfb" stroke="#6c6c6c" stroke-width="1.15" stroke-linejoin="round"/><path d="M8.2 0.6 V3.8 H11.4" fill="none" stroke="#6c6c6c" stroke-width="1.1"/></svg>
<div class="t" style="left:479.50px;top:494px;color:#1a1a1a;letter-spacing:-0.420px;word-spacing:0.420px;">autosave 1 - Mayson Kword (C63A6FD7-4E46-76BE-6FAB-D9B2694256D0).sav</div>
<div class="t" style="left:908.50px;top:494px;color:#5c5c5c;letter-spacing:-0.612px;word-spacing:0.612px;">30.04.2025 6:12</div>
<div class="t" style="left:1053.00px;top:494px;color:#5c5c5c;letter-spacing:-0.311px;word-spacing:0.311px;">Файл "SAV"</div>
<div class="t" style="left:939.00px;width:300px;text-align:right;top:494px;color:#5c5c5c;letter-spacing:-0.4px;">932 КБ</div>
<svg style="position:absolute;left:461px;top:521px" width="12" height="16" viewBox="0 0 12 16"><path d="M0.6 0.6 H8.2 L11.4 3.8 V15.4 H0.6Z" fill="#fbfbfb" stroke="#6c6c6c" stroke-width="1.15" stroke-linejoin="round"/><path d="M8.2 0.6 V3.8 H11.4" fill="none" stroke="#6c6c6c" stroke-width="1.1"/></svg>
<div class="t" style="left:479.50px;top:522px;color:#1a1a1a;letter-spacing:-0.420px;word-spacing:0.420px;">autosave 2 - Mayson Kword (C63A6FD7-4E46-76BE-6FAB-D9B2694256D0).sav</div>
<div class="t" style="left:908.50px;top:522px;color:#5c5c5c;letter-spacing:-0.612px;word-spacing:0.612px;">30.04.2025 6:13</div>
<div class="t" style="left:1053.00px;top:522px;color:#5c5c5c;letter-spacing:-0.311px;word-spacing:0.311px;">Файл "SAV"</div>
<div class="t" style="left:939.00px;width:300px;text-align:right;top:522px;color:#5c5c5c;letter-spacing:-0.4px;">938 КБ</div>
<svg style="position:absolute;left:461px;top:549px" width="12" height="16" viewBox="0 0 12 16"><path d="M0.6 0.6 H8.2 L11.4 3.8 V15.4 H0.6Z" fill="#fbfbfb" stroke="#6c6c6c" stroke-width="1.15" stroke-linejoin="round"/><path d="M8.2 0.6 V3.8 H11.4" fill="none" stroke="#6c6c6c" stroke-width="1.1"/></svg>
<div class="t" style="left:479.50px;top:550px;color:#1a1a1a;letter-spacing:-0.420px;word-spacing:0.420px;">autosave 3 - Mayson Kword (C63A6FD7-4E46-76BE-6FAB-D9B2694256D0).sav</div>
<div class="t" style="left:908.50px;top:550px;color:#5c5c5c;letter-spacing:-0.616px;word-spacing:0.616px;">28.04.2025 19:01</div>
<div class="t" style="left:1053.00px;top:550px;color:#5c5c5c;letter-spacing:-0.311px;word-spacing:0.311px;">Файл "SAV"</div>
<div class="t" style="left:939.00px;width:300px;text-align:right;top:550px;color:#5c5c5c;letter-spacing:-0.4px;">910 КБ</div>
<svg style="position:absolute;left:461px;top:577px" width="12" height="16" viewBox="0 0 12 16"><path d="M0.6 0.6 H8.2 L11.4 3.8 V15.4 H0.6Z" fill="#fbfbfb" stroke="#6c6c6c" stroke-width="1.15" stroke-linejoin="round"/><path d="M8.2 0.6 V3.8 H11.4" fill="none" stroke="#6c6c6c" stroke-width="1.1"/></svg>
<div class="t" style="left:479.50px;top:578px;color:#1a1a1a;letter-spacing:-0.420px;word-spacing:0.420px;">autosave 4 - Mayson Kword (C63A6FD7-4E46-76BE-6FAB-D9B2694256D0).sav</div>
<div class="t" style="left:908.50px;top:578px;color:#5c5c5c;letter-spacing:-0.616px;word-spacing:0.616px;">28.04.2025 18:45</div>
<div class="t" style="left:1053.00px;top:578px;color:#5c5c5c;letter-spacing:-0.311px;word-spacing:0.311px;">Файл "SAV"</div>
<div class="t" style="left:939.00px;width:300px;text-align:right;top:578px;color:#5c5c5c;letter-spacing:-0.4px;">905 КБ</div>
<svg style="position:absolute;left:461px;top:605px" width="12" height="16" viewBox="0 0 12 16"><path d="M0.6 0.6 H8.2 L11.4 3.8 V15.4 H0.6Z" fill="#fbfbfb" stroke="#6c6c6c" stroke-width="1.15" stroke-linejoin="round"/><path d="M8.2 0.6 V3.8 H11.4" fill="none" stroke="#6c6c6c" stroke-width="1.1"/></svg>
<div class="t" style="left:479.50px;top:606px;color:#1a1a1a;letter-spacing:-0.420px;word-spacing:0.420px;">autosave 5 - Mayson Kword (C63A6FD7-4E46-76BE-6FAB-D9B2694256D0).sav</div>
<div class="t" style="left:908.50px;top:606px;color:#5c5c5c;letter-spacing:-0.616px;word-spacing:0.616px;">28.04.2025 18:34</div>
<div class="t" style="left:1053.00px;top:606px;color:#5c5c5c;letter-spacing:-0.311px;word-spacing:0.311px;">Файл "SAV"</div>
<div class="t" style="left:939.00px;width:300px;text-align:right;top:606px;color:#5c5c5c;letter-spacing:-0.4px;">903 КБ</div>
<svg style="position:absolute;left:461px;top:633px" width="12" height="16" viewBox="0 0 12 16"><path d="M0.6 0.6 H8.2 L11.4 3.8 V15.4 H0.6Z" fill="#fbfbfb" stroke="#6c6c6c" stroke-width="1.15" stroke-linejoin="round"/><path d="M8.2 0.6 V3.8 H11.4" fill="none" stroke="#6c6c6c" stroke-width="1.1"/></svg>
<div class="t" style="left:479.50px;top:634px;color:#1a1a1a;letter-spacing:-0.256px;">quicksave.sav</div>
<div class="t" style="left:908.50px;top:634px;color:#5c5c5c;letter-spacing:-0.612px;word-spacing:0.612px;">30.04.2025 6:16</div>
<div class="t" style="left:1053.00px;top:634px;color:#5c5c5c;letter-spacing:-0.311px;word-spacing:0.311px;">Файл "SAV"</div>
<div class="t" style="left:939.00px;width:300px;text-align:right;top:634px;color:#5c5c5c;letter-spacing:-0.4px;">921 КБ</div>
<svg style="position:absolute;left:461px;top:661px" width="12" height="16" viewBox="0 0 12 16"><path d="M0.6 0.6 H8.2 L11.4 3.8 V15.4 H0.6Z" fill="#fbfbfb" stroke="#6c6c6c" stroke-width="1.15" stroke-linejoin="round"/><path d="M8.2 0.6 V3.8 H11.4" fill="none" stroke="#6c6c6c" stroke-width="1.1"/></svg>
<div class="t" style="left:479.50px;top:662px;color:#1a1a1a;letter-spacing:-0.500px;">Save_Settings.sav</div>
<div class="t" style="left:908.50px;top:662px;color:#5c5c5c;letter-spacing:-0.616px;word-spacing:0.616px;">30.04.2025 17:07</div>
<div class="t" style="left:1053.00px;top:662px;color:#5c5c5c;letter-spacing:-0.311px;word-spacing:0.311px;">Файл "SAV"</div>
<div class="t" style="left:939.00px;width:300px;text-align:right;top:662px;color:#5c5c5c;letter-spacing:-0.4px;">23 КБ</div>
<svg style="position:absolute;left:461px;top:689px" width="12" height="16" viewBox="0 0 12 16"><path d="M0.6 0.6 H8.2 L11.4 3.8 V15.4 H0.6Z" fill="#fbfbfb" stroke="#6c6c6c" stroke-width="1.15" stroke-linejoin="round"/><path d="M8.2 0.6 V3.8 H11.4" fill="none" stroke="#6c6c6c" stroke-width="1.1"/></svg>
<div class="t" style="left:479.50px;top:690px;color:#1a1a1a;letter-spacing:-0.494px;">saves_meta.sav</div>
<div class="t" style="left:908.50px;top:690px;color:#5c5c5c;letter-spacing:-0.616px;word-spacing:0.616px;">30.04.2025 17:07</div>
<div class="t" style="left:1053.00px;top:690px;color:#5c5c5c;letter-spacing:-0.311px;word-spacing:0.311px;">Файл "SAV"</div>
<div class="t" style="left:939.00px;width:300px;text-align:right;top:690px;color:#5c5c5c;letter-spacing:-0.4px;">201 КБ</div>
</body></html>
